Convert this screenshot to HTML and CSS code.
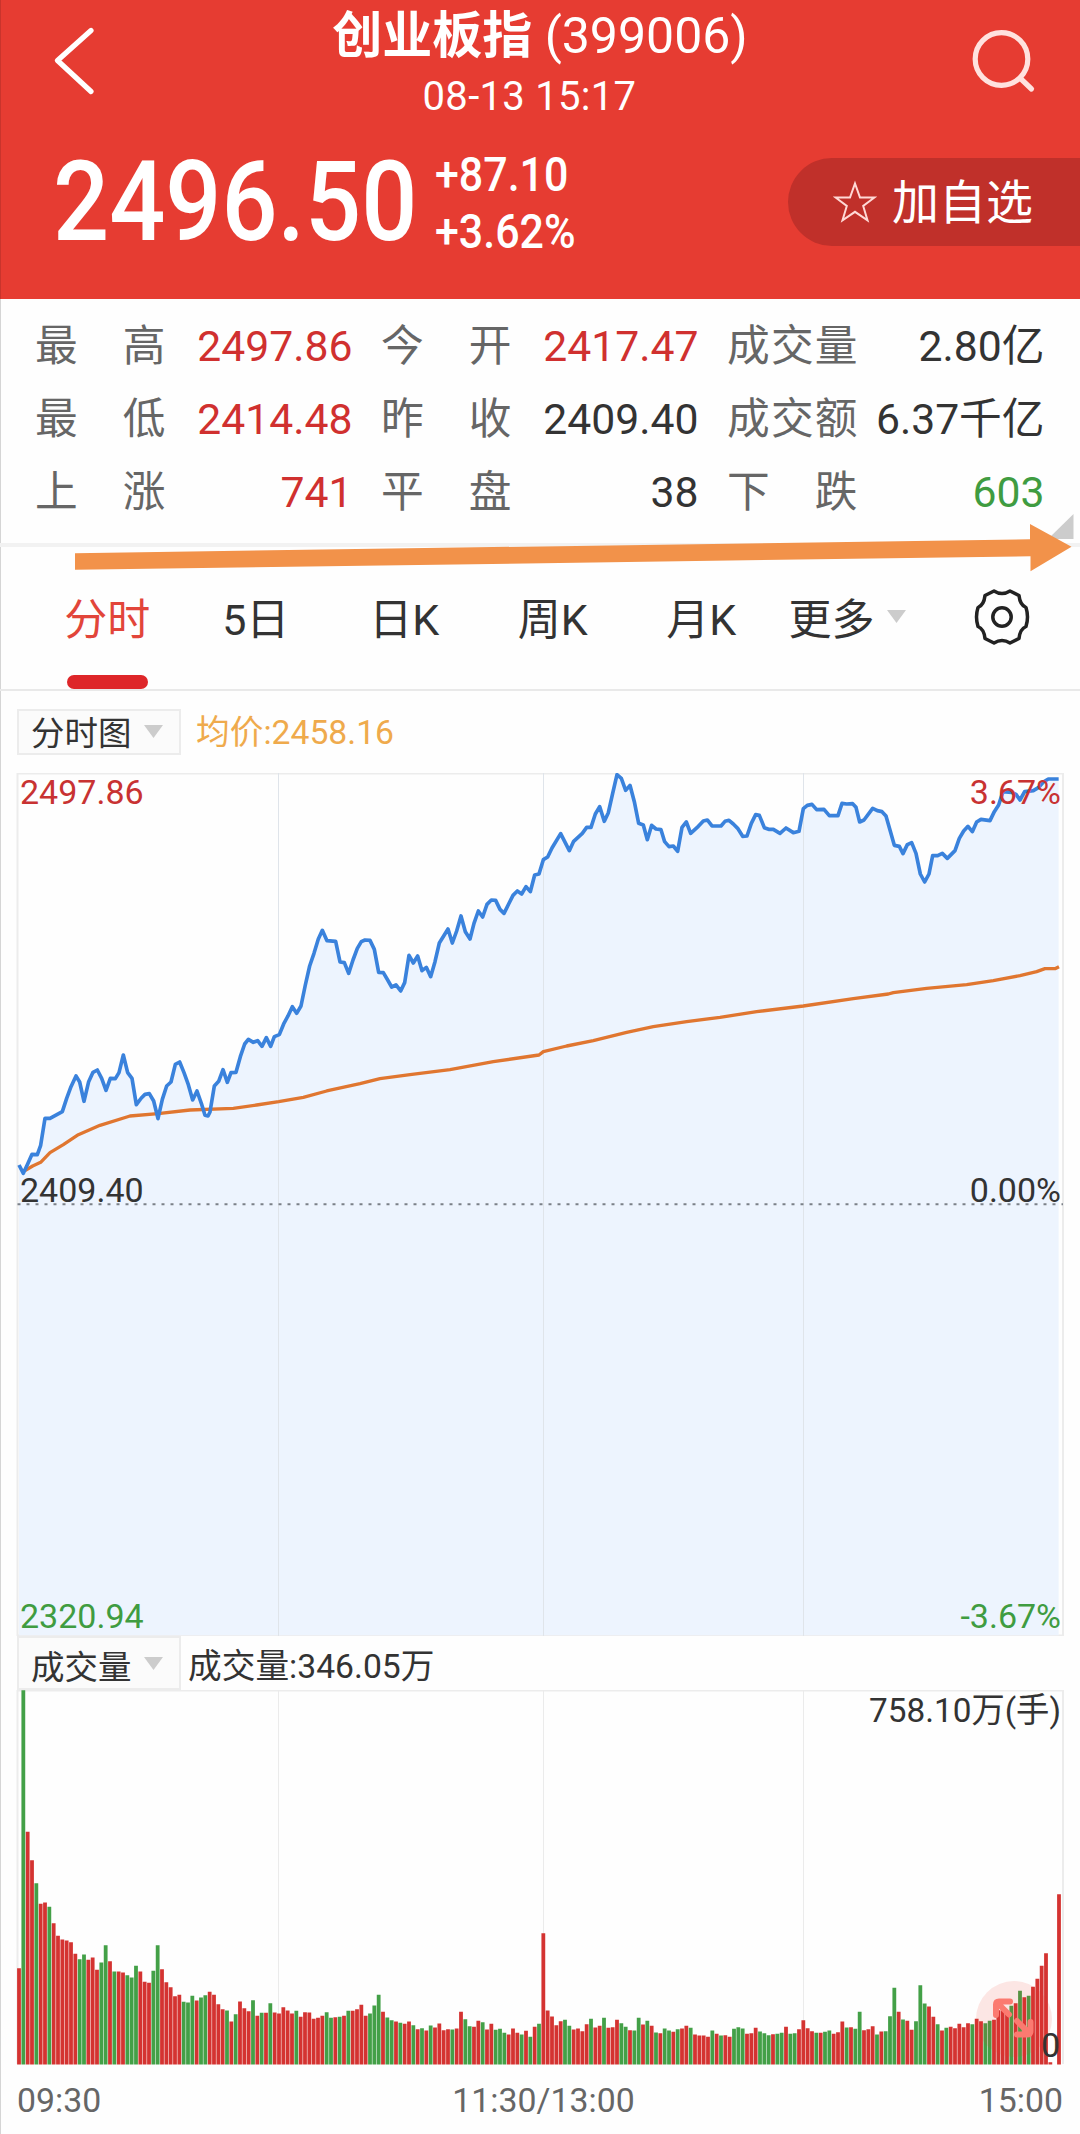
FILE: index.html
```html
<!DOCTYPE html>
<html lang="zh-CN">
<head>
<meta charset="utf-8">
<title>创业板指 (399006)</title>
<link rel="stylesheet" href="styles.css">
</head>
<body>
<div class="page">
  <header class="header">
    <div class="nav">
      <svg class="nav-icon" viewBox="0 0 80 80"><path d="M51 10.5 17.500 40.500 51 71.500" /></svg>
      <div class="nav-title">
        <h1 class="title"><b>创业板指</b> (399006)</h1>
        <div class="time">08-13 15:17</div>
      </div>
      <svg class="nav-icon search" viewBox="0 0 80 80"><circle cx="41.500" cy="39" r="26.300"/><path d="M60 58 71.500 69"/></svg>
    </div>
    <div class="quote">
      <div class="price"><span>2496.50</span></div>
      <div class="change"><span class="amount">+87.10</span><span class="percent">+3.62%</span></div>
      <button class="add">
        <svg class="star" viewBox="0 0 44 44"><path d="M22 3.500 27 17.500H41.500L30.200 26 34.500 40.300 22 31.800 9.500 40.300 13.800 26 2.500 17.500H17Z"/></svg>
        <span>加自选</span>
      </button>
    </div>
  </header>

  <section class="stats">
    <div class="stat"><span class="label"><i>最</i><i>高</i></span><span class="up">2497.86</span></div>
    <div class="stat"><span class="label"><i>今</i><i>开</i></span><span class="up">2417.47</span></div>
    <div class="stat"><span class="label"><i>成</i><i>交</i><i>量</i></span><span>2.80亿</span></div>
    <div class="stat"><span class="label"><i>最</i><i>低</i></span><span class="up">2414.48</span></div>
    <div class="stat"><span class="label"><i>昨</i><i>收</i></span><span>2409.40</span></div>
    <div class="stat"><span class="label"><i>成</i><i>交</i><i>额</i></span><span>6.37千亿</span></div>
    <div class="stat"><span class="label"><i>上</i><i>涨</i></span><span class="up">741</span></div>
    <div class="stat"><span class="label"><i>平</i><i>盘</i></span><span>38</span></div>
    <div class="stat"><span class="label"><i>下</i><i>跌</i></span><span class="down">603</span></div>
    <svg class="marker" viewBox="0 510 1080 66">
      <path class="corner" d="M1073.500 514V539H1048Z"/>
      <path class="arrow" d="M75 553.200 1030 539.300V524L1071.500 546.700 1030.500 571.300V556.300L75 569.800Z"/>
    </svg>
  </section>

  <nav class="tabs">
    <a class="tab active">分时</a>
    <a class="tab">5日</a>
    <a class="tab">日K</a>
    <a class="tab">周K</a>
    <a class="tab">月K</a>
    <a class="more">更多<svg class="caret" viewBox="0 0 19 13"><path d="M0 0H19L9.500 13Z"/></svg></a>
    <svg class="gear" viewBox="-30 -30 60 60">
      <path d="M-8 -26Q0 -21 8 -26L17 -21.500Q18 -12 24 -9.500Q27 0 24 9.500Q18 12 17 21.500L8 26Q0 21 -8 26L-17 21.500Q-18 12 -24 9.500Q-27 0 -24 -9.500Q-18 -12 -17 -21.500Z"/>
      <circle r="9.200"/>
    </svg>
  </nav>

  <div class="toolbar">
    <div class="select">分时图<svg class="caret" viewBox="0 0 19 13"><path d="M0 0H19L9.500 13Z"/></svg></div>
    <span class="avg">均价:2458.16</span>
  </div>

  <svg class="chart" viewBox="0 773 1080 863">
    <path class="frame" d="M17.500 773.500H1063V1635.500H17.500Z"/>
    <g transform="translate(0 760) scale(.33333)"><path id="area" class="area"/></g>
    <path class="grid" d="M278.500 773V1636M543.500 773V1636M803.500 773V1636"/>
    <g transform="translate(0 760) scale(.33333)">
      <path id="avg" class="avg-line"/>
      <path id="price" class="price-line"/>
    </g>
    <path class="zero" d="M17.500 1204.300H1063"/>
    <text class="up" x="20" y="804">2497.86</text>
    <text x="20" y="1202">2409.40</text>
    <text class="down" x="20" y="1628">2320.94</text>
    <text class="up end" x="1061" y="804">3.67%</text>
    <text class="end" x="1061" y="1202">0.00%</text>
    <text class="down end" x="1061" y="1628">-3.67%</text>
  </svg>

  <div class="toolbar volume-bar">
    <div class="select">成交量<svg class="caret" viewBox="0 0 19 13"><path d="M0 0H19L9.500 13Z"/></svg></div>
    <span>成交量:346.05万</span>
  </div>

  <svg class="volume" viewBox="0 1690 1080 375">
    <path class="frame" d="M17.500 2064V1690.500H1063V2064"/>
    <path class="grid" d="M278.500 1690V2064M543.500 1690V2064M803.500 1690V2064"/>
    <path id="rise" class="bars rise"/>
    <path id="fall" class="bars fall"/>
    <circle class="expand-bg" cx="1014" cy="2019" r="38"/>
    <path class="expand" d="M1010 2001.500H999Q996 2001.500 996 2004.500V2015M998 2003.500 1009 2014.500M1030.500 2022V2031Q1030.500 2034.500 1027 2034.500H1017M1029 2033 1017 2021"/>
    <text class="end" x="1061" y="1722" textLength="192" lengthAdjust="spacingAndGlyphs">758.10万(手)</text>
    <text class="end" x="1060" y="2057">0</text>
  </svg>

  <div class="axis"><span>09:30</span><span>11:30/13:00</span><span>15:00</span></div>
</div>
<script src="chart.js"></script>
</body>
</html>
```
FILE: styles.css
```css
* { box-sizing: border-box; }
body {
  margin: 0;
  background: #fefefe;
  color: #333;
  font-family: Roboto, "Noto Sans CJK SC", sans-serif;
}
.page {
  width: 1080px;
  height: 2134px;
  overflow: hidden;
  box-shadow: inset 1px 0 rgba(0, 0, 0, .16);
  display: flex;
  flex-direction: column;
}
svg { display: block; flex: none; }
i { font-style: normal; }
.up { color: #d0302f; fill: #c83232; }
.down { color: #3f9c41; fill: #3f9c41; }

.header {
  height: 299px;
  flex: none;
  background: #e63c32;
  color: #fff;
  box-shadow: inset 1px 0 #c9342c;
}
.nav {
  height: 120px;
  padding: 6px 36px 0 40px;
  display: flex;
  justify-content: space-between;
}
.nav-icon {
  width: 80px;
  height: 80px;
  margin-top: 14px;
  fill: none;
  stroke: #fff;
  stroke-width: 5.200;
  stroke-linecap: round;
  stroke-linejoin: round;
}
.nav-icon.search { stroke: #ffe2df; margin-right: 4px; }
.nav-title { text-align: center; }
.title { margin: 0; font-size: 50px; font-weight: 400; line-height: 60px; }
.time { margin-top: 7px; padding-right: 21px; font-size: 40px; line-height: 48px; letter-spacing: .3px; }
.quote { display: flex; align-items: flex-start; padding: 26px 0 0 53px; }
.price { flex: 0 0 382px; min-width: 0; font-size: 112px; line-height: 111px; font-weight: 500; }
.price span { display: inline-block; transform: scaleX(.882); transform-origin: 0 0; }
.change { font-size: 48px; line-height: 57px; font-weight: 500; display: flex; flex-direction: column; transform: scaleX(.895); transform-origin: 0 0; }
.add {
  width: 292px;
  height: 88px;
  margin: 12px 0 0 auto;
  padding: 0 0 0 45px;
  border: 0;
  border-radius: 44px 0 0 44px;
  background: #c0302a;
  color: #fff;
  font: 47px/88px Roboto, "Noto Sans CJK SC", sans-serif;
  display: flex;
  align-items: center;
  gap: 15px;
}
.add span { padding-top: 2px; }
.star { width: 44px; height: 44px; fill: none; stroke: #ffd9d6; stroke-width: 2; }

.stats {
  position: relative;
  flex: none;
  height: 248px;
  padding: 10px 34px 0 35px;
  border-bottom: 4px solid #f2f2f2;
  display: grid;
  grid-template-columns: repeat(3, 317.500px);
  grid-auto-rows: 73px;
  column-gap: 28.500px;
  font-size: 42.700px;
  line-height: 74px;
}
.stat { display: flex; justify-content: space-between; white-space: nowrap; }
.label { width: 130.500px; display: flex; justify-content: space-between; color: #666; }
.marker { position: absolute; left: 0; top: 211px; width: 1080px; height: 66px; }
.corner { fill: #ccc; }
.arrow { fill: #f2924a; }

.tabs {
  height: 144px;
  flex: none;
  padding: 0 0 0 33px;
  border-bottom: 2px solid #e9e9e9;
  display: flex;
  font-size: 43px;
  line-height: 147px;
}
.tab { width: 148.500px; text-align: center; position: relative; }
.tab.active { color: #e2453a; }
.tab.active::after {
  content: "";
  position: absolute;
  left: 34px;
  bottom: 0;
  width: 81px;
  height: 14px;
  border-radius: 7px;
  background: #de2629;
}
.more { margin-left: 13px; display: flex; gap: 12px; }
.caret { width: 19px; height: 13px; fill: #ccc; }
.more .caret { margin-top: 63px; }
.gear { width: 60px; height: 60px; margin: 40px 0 0 66px; fill: none; stroke: #222; stroke-width: 3.500; stroke-linejoin: round; }

.toolbar {
  height: 82px;
  flex: none;
  padding: 0 0 0 17px;
  display: flex;
  align-items: center;
  gap: 15px;
  font-size: 33.700px;
  line-height: 46px;
}
.select {
  width: 164px;
  height: 46px;
  padding-left: 12px;
  border: 2px solid #ececec;
  background: #fbfbfb;
  line-height: 45px;
  font-size: 33.500px;
  display: flex;
  gap: 12px;
}
.select .caret { margin-top: 14px; }
.avg { color: #efaa4c; padding-top: 2px; }
.volume-bar { height: 54px; gap: 7px; }
.volume-bar .select { height: 54px; line-height: 60px; }
.volume-bar .select .caret { margin-top: 19px; }
.volume-bar > span { line-height: 60px; padding-top: 7px; }

.chart { width: 1080px; height: 863px; }
.volume { width: 1080px; height: 375px; }
svg text { font-size: 34px; }
svg text:not([class*="up"]):not([class*="down"]) { fill: #333; }
.end { text-anchor: end; }
.frame { fill: none; stroke: #ececec; stroke-width: 2; }
.grid { fill: none; stroke: #dfe4ea; stroke-width: 1; }
.volume .grid { stroke: #ebebeb; }
.zero { fill: none; stroke: #7b8088; stroke-width: 2; stroke-dasharray: 3 6; }
.area { fill: #edf4fe; }
.price-line { fill: none; stroke: #3a82dc; stroke-width: 11; stroke-linejoin: round; }
.avg-line { fill: none; stroke: #e07630; stroke-width: 10; stroke-linejoin: round; }
.bars { stroke-width: 3.800; fill: none; }
.rise { stroke: #d43331; }
.fall { stroke: #43a047; }
.expand-bg { fill: rgba(240, 60, 45, .12); }
.expand { fill: none; stroke: #fb7a70; stroke-width: 6; stroke-linecap: round; }

.axis {
  flex: 1;
  padding: 11px 17px 0 17px;
  display: grid;
  grid-template-columns: 1fr auto 1fr;
  font-size: 33.800px;
  line-height: 50px;
  color: #666;
}
.axis span:nth-child(2) { padding-left: 7px; }
.axis span:last-child { text-align: right; }
```
FILE: chart.js
```js
// Coordinates are in thirds of a pixel; each part starts at its own x origin.
const price = [
  [0, "57,1215 70,1240 83,1212 96,1183 112,1184 122,1156 135,1075 150,1075 187,1055 200,1015 213,980 228,948 239,966 252,1024 266,965 279,937 292,930 305,955 318,991 331,955 346,956 357,938 370,885 383,938 396,955 409,1034 424,1014 435,1003 448,1001 461,1023 474,1076 487,1018 500,978 513,966 526,913 539,906 552,938 565,974 578,1020 591,993 604,1030 615,1066 624,1068 630,1056 643,978 656,964 669,929 682,967 693,938 708,937 721,890 734,852 745,838 760,847 773,842 786,859 799,833 812,859 823,830 838,824 851,792 864,768 877,740 890,760 903,738 916,675 929,618 942,580 955,537 967,511 981,542 1007,544 1020,606 1033,608 1046,640 1059,600 1072,565"],
  [1080, "4,545 15,540 30,541 43,568 56,637 70,638 83,660 95,681 108,675 122,693 134,668 147,586 160,609 173,588 186,632 199,622 212,650 225,605 238,549 264,507 277,549 290,513 303,468 316,515 330,537 342,490 355,453 368,471 381,433 394,420 407,421 420,448 432,460 446,432 459,406 472,393 485,402 498,380 511,395 524,345 537,342 550,299 563,291 576,264 602,221 628,272 641,244 667,220 680,202 693,202 706,162 719,140 733,184 745,158 758,100 771,44 784,55 797,91 810,76 823,125 836,190 850,195 862,239 875,196 888,207 903,209 914,245 927,260 940,258 953,274 966,202 979,186 992,220 1015,199 1030,183 1042,180 1056,198"],
  [2160, "3,198 15,184 27,181 40,192 53,205 68,229 81,228 94,190 107,164 118,166 133,203 146,208 160,208 180,220 198,204 220,218 237,214 250,146 262,136 276,133 290,149 312,148 328,167 354,167 366,130 380,132 398,131 408,142 419,186 432,180 458,145 472,152 486,155 498,168 510,210 523,256 538,259 549,281 562,254 575,248 588,280 601,342 614,366 627,342 638,287 653,287 667,280 682,295 705,272 718,235 731,213 744,199 757,215 770,186 783,178 810,182 823,155 836,135 849,95 875,97 888,103 900,120 914,95 940,92 955,83 970,66 985,57 1016,57"]
];
const average = [
  [0, "75,1232 98,1218 122,1207 150,1178 190,1154 235,1124 300,1096 390,1068 474,1061 570,1050 700,1045 770,1035 836,1025 910,1012 980,993 1080,971"],
  [1080, "60,956 150,944 270,929 400,905 537,885 550,875 620,858 700,842 800,817 880,800 980,785 1080,772"],
  [2160, "110,755 250,738 400,716 505,702 520,698 620,685 740,674 820,662 900,647 950,635 975,626 1005,626 1017,620"]
];
const line = parts => "M" + parts.flatMap(([x0, pts]) =>
  pts.split(" ").map(p => { const [x, y] = p.split(",").map(Number); return (x + x0) + " " + y; })).join("L");
const set = (id, d) => document.getElementById(id).setAttribute("d", d);
set("price", line(price));
set("area", line(price) + "V2626H57Z");
set("avg", line(average));

// One entry per minute: r = rising, g = falling, followed by the bar height.
const volume = `r289 g1123 r698 r613 g544 r482 r486 g473 r424 r386 r375 r372 r367 r332 g316 g330 r314 r321 r284 g306
g358 r310 g279 r279 r276 g268 g261 g296 r279 r248 r245 g281 g358 r286 r247 r232 r205 r209 g188 g186
g206 r192 g201 g208 r218 r209 r181 r166 g162 r129 g151 r189 r169 r160 g193 r146 g155 r155 g184 r156
r153 r172 r162 r153 g161 r143 r157 r156 r137 r140 r146 g157 g140 r142 g143 r146 g161 r161 r166 r179
r146 g153 g177 g209 r158 g141 g133 r129 g125 r122 r129 g118 r106 g109 r102 g117 r111 r123 r103 r106
g105 r108 r158 g136 g115 r113 r131 g127 r105 r122 g104 g107 g95 r90 r108 r95 g90 r101 g83 r113
g122 r394 r162 r144 r118 r130 g134 g116 r105 r108 r100 r121 g137 r111 r116 g140 r110 r112 r134 g124
g113 r103 g102 g140 r120 g131 r116 g96 r94 g108 g102 r98 g106 r108 r116 g110 r90 r87 r87 r83
g102 r92 g87 r88 r83 g107 g112 g108 r92 r94 r110 g99 g94 g88 r91 g92 g95 r113 g92 g94
r106 r133 r109 r100 g95 r95 g98 g102 r92 r97 r129 g111 r112 g107 g158 r103 r106 r115 g90 r99
g100 g145 g230 r158 g135 r131 r104 g130 g238 g183 r174 r143 g121 r102 g110 r113 r109 r122 r112 r124
g121 r137 r130 g124 g131 r134 r163 r163 r153 g176 r184 g221 r202 g206 r233 r257 r296 r334 r7 r0 r511`.split(/\s+/);
const bars = { r: "", g: "" };
volume.forEach((v, i) => {
  const h = v.slice(1) / 3;
  if (h) bars[v[0]] += `M${(19 + i * 13 / 3).toFixed(2)} 2064.500v${-h.toFixed(2)}`;
});
set("rise", bars.r);
set("fall", bars.g);
```
